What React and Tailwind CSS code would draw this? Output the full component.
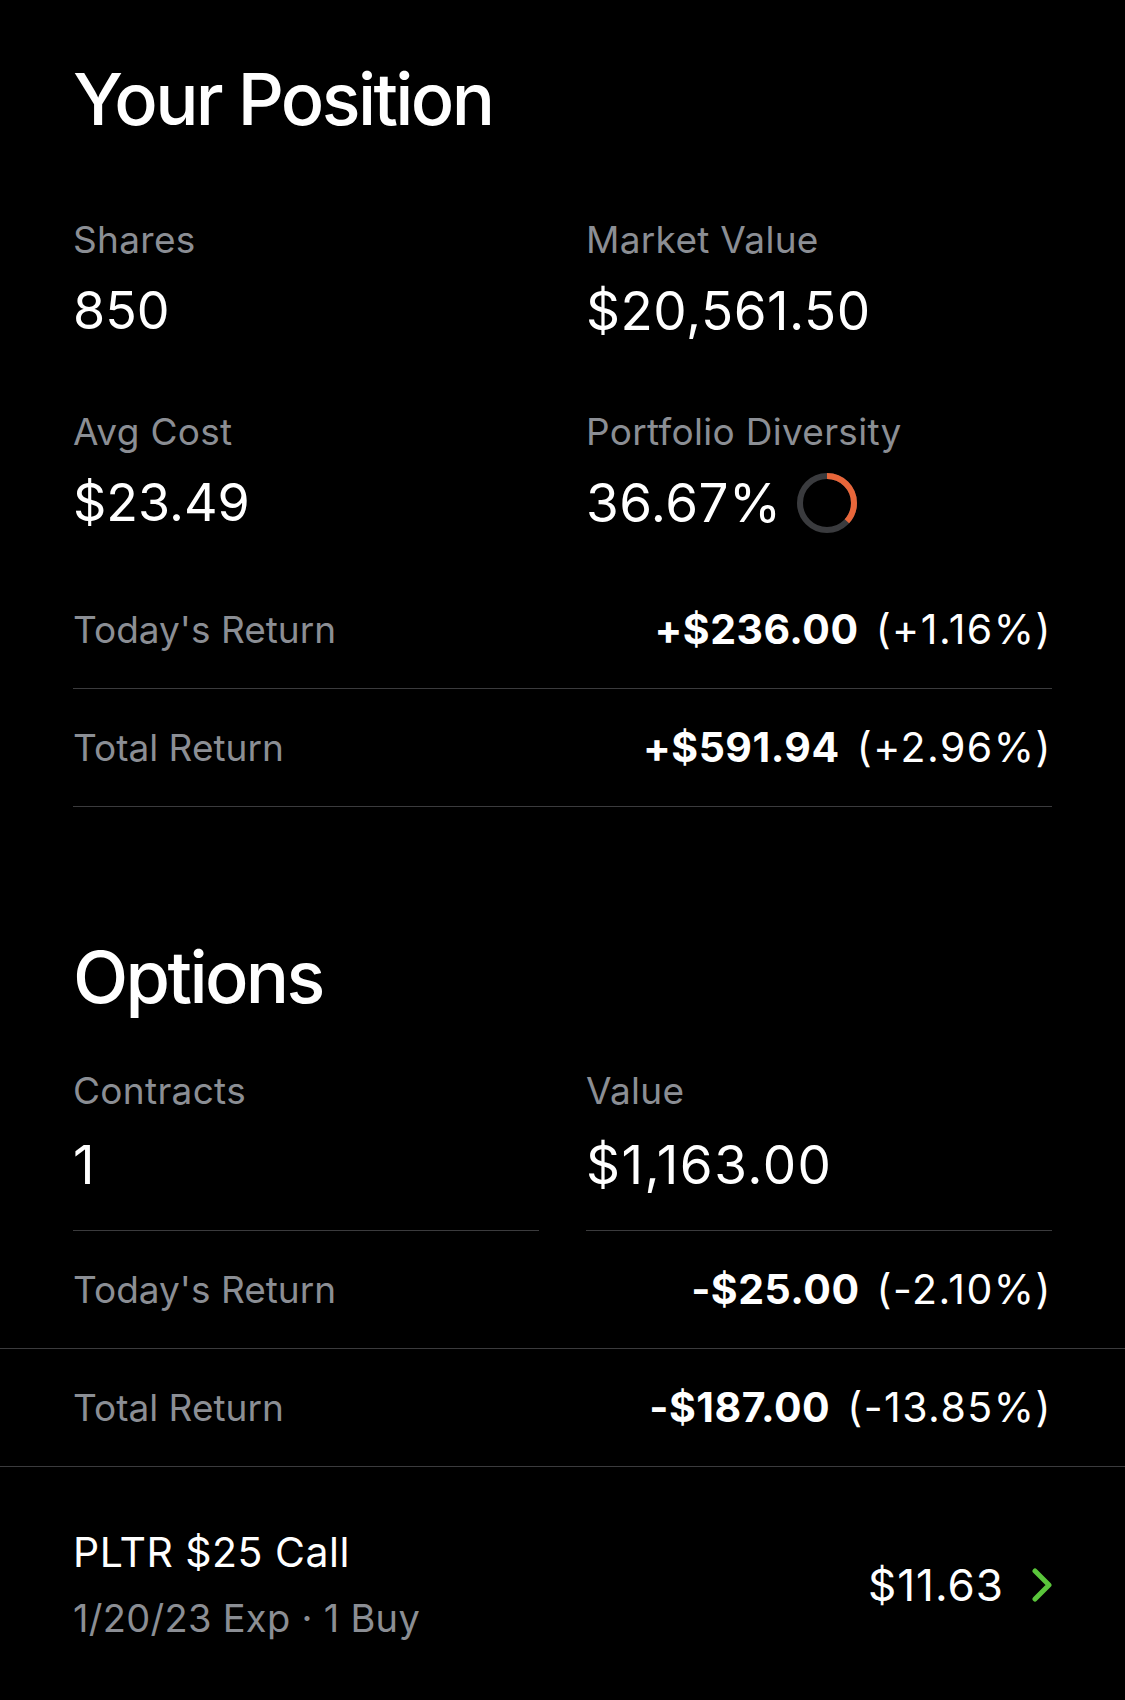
const font = { fontFamily: 'Inter, "Liberation Sans", sans-serif' };

function Ring({ pct }) {
  const r = 27;
  const c = 2 * Math.PI * r;
  return (
    <svg width="60" height="60" viewBox="0 0 60 60" className="shrink-0">
      <circle cx="30" cy="30" r={r} fill="none" stroke="#3a3b3e" strokeWidth="6" />
      <circle
        cx="30"
        cy="30"
        r={r}
        fill="none"
        stroke="#e8663a"
        strokeWidth="6"
        strokeDasharray={`${(c * pct) / 100} ${c}`}
        transform="rotate(-90 30 30)"
      />
    </svg>
  );
}

function Stat({ label, value, extra, wide }) {
  return (
    <div>
      <div className="h-[44px] flex items-center text-[37px] leading-none tracking-[0.3px] text-[#8b8e94]">{label}</div>
      <div
        className={
          wide
            ? 'mt-[20px] h-[60px] flex items-center gap-[15px] text-[53px] leading-none tracking-[0.5px] text-white'
            : 'mt-[20px] h-[60px] flex items-center gap-[15px] text-[52px] leading-none text-white'
        }
      >
        <span>{value}</span>
        {extra}
      </div>
    </div>
  );
}

function ReturnRow({ label, amount, pct, full }) {
  return (
    <div className={full ? 'border-b border-[#3b3b3d] px-[73px]' : 'border-b border-[#3b3b3d]'}>
      <div className="h-[117px] flex items-center justify-between">
        <span className="text-[37px] leading-none text-[#8b8e94]">{label}</span>
        <span className="flex items-center gap-[17px] text-[41px] leading-none text-white">
          <span className="font-bold tracking-[0.5px]">{amount}</span>
          <span className="tracking-[1.5px]">{pct}</span>
        </span>
      </div>
    </div>
  );
}

export default function App() {
  return (
    <div className="min-h-[1700px] bg-black" style={font}>
      {/* Your Position */}
      <div className="px-[73px] pt-[63px]">
        <h1 className="h-[72px] flex items-center text-[72px] leading-none font-medium tracking-[-2.6px] text-white">
          Your Position
        </h1>
        <div className="mt-[82px] grid grid-cols-2 gap-x-[47px] gap-y-[68px]">
          <Stat label="Shares" value="850" />
          <Stat label="Market Value" value="$20,561.50" wide />
          <Stat label="Avg Cost" value="$23.49" />
          <Stat label="Portfolio Diversity" value="36.67%" wide extra={<Ring pct={36.67} />} />
        </div>
        <div className="mt-[38px]">
          <ReturnRow label="Today's Return" amount="+$236.00" pct="(+1.16%)" />
          <ReturnRow label="Total Return" amount="+$591.94" pct="(+2.96%)" />
        </div>
      </div>

      {/* Options */}
      <div className="px-[73px] pt-[134px]">
        <h2 className="h-[72px] flex items-center text-[72px] leading-none font-medium tracking-[-2.6px] text-white">
          Options
        </h2>
        <div className="mt-[55px] grid grid-cols-2 gap-x-[47px]">
          <div className="border-b border-[#3b3b3d] pb-[35px]">
            <div className="h-[44px] flex items-center text-[37px] leading-none tracking-[0.3px] text-[#8b8e94]">Contracts</div>
            <div className="mt-[23px] h-[60px] flex items-center text-[53px] leading-none text-white">1</div>
          </div>
          <div className="border-b border-[#3b3b3d] pb-[35px]">
            <div className="h-[44px] flex items-center text-[37px] leading-none tracking-[0.3px] text-[#8b8e94]">Value</div>
            <div className="mt-[23px] h-[60px] flex items-center text-[53px] leading-none tracking-[1.5px] text-white">$1,163.00</div>
          </div>
        </div>
      </div>
      <ReturnRow full label="Today's Return" amount="-$25.00" pct="(-2.10%)" />
      <ReturnRow full label="Total Return" amount="-$187.00" pct="(-13.85%)" />

      {/* Contract row */}
      <div className="px-[73px] pt-[63px] flex items-center justify-between">
        <div>
          <div className="h-[44px] flex items-center text-[41px] leading-none tracking-[0.5px] text-white">PLTR $25 Call</div>
          <div className="mt-[22px] h-[44px] flex items-center text-[38px] leading-none tracking-[0.3px] text-[#8b8e94]">
            1/20/23 Exp · 1 Buy
          </div>
        </div>
        <div className="flex items-center gap-[28px]">
          <span className="text-[44px] leading-none tracking-[1px] text-white">$11.63</span>
          <svg width="20" height="34" viewBox="0 0 20 34">
            <polyline points="3,3 17,17 3,31" fill="none" stroke="#5ac53b" strokeWidth="5" strokeLinecap="round" strokeLinejoin="round" />
          </svg>
        </div>
      </div>
    </div>
  );
}
